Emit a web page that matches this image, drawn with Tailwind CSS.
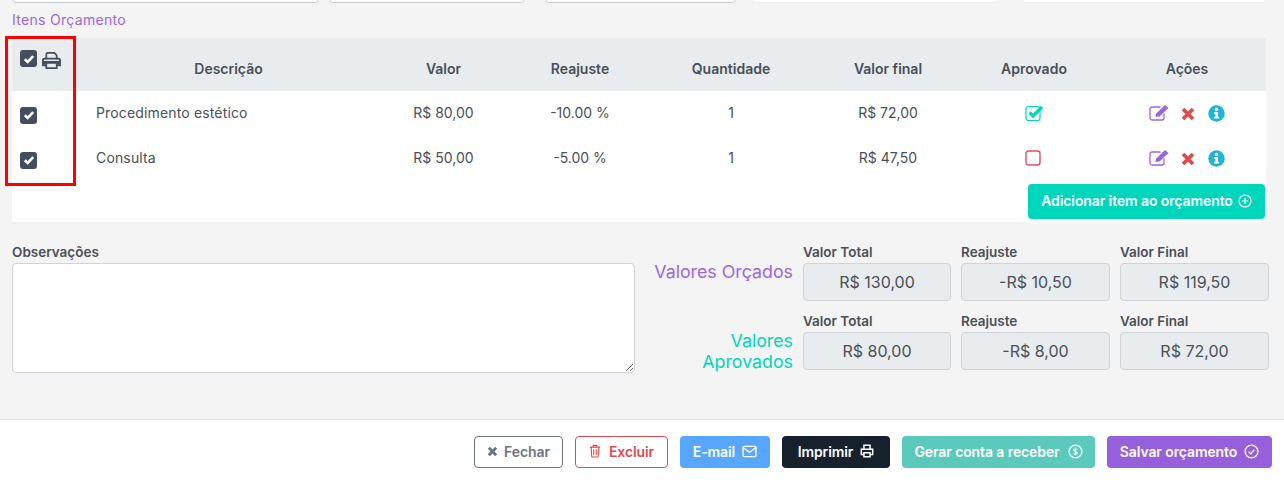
<!DOCTYPE html>
<html lang="pt-BR">
<head>
  <meta charset="UTF-8">
  <title>Itens Orçamento</title>
  <script src="https://cdn.jsdelivr.net/npm/@tailwindcss/browser@4"></script>
</head>
<body class="relative w-[1284px] h-[482px] overflow-hidden bg-[#f4f4f4] text-[#495057] font-['Inter',sans-serif] text-[14px]">
  <!-- Topo: campos cortados -->
  <div class="flex h-[3px] items-end">
    <div class="ml-[12px] w-[307px] h-[6px] bg-white border border-[#ccc] rounded-b"></div>
    <div class="ml-[10px] w-[196px] h-[6px] bg-white border border-[#ccc] rounded-b"></div>
    <div class="ml-[20px] w-[191px] h-[6px] bg-white border border-[#ccc] rounded-b"></div>
    <div class="ml-[15px] w-[248px] h-[6px] bg-white border border-[#eee] rounded-b"></div>
    <div class="ml-[22px] w-[246px] h-[6px] bg-white border border-[#eee] rounded-b"></div>
  </div>

  <h2 class="ml-[12px] mt-[8px] h-[17px] leading-[17px] text-[14px] tracking-[0.3px] text-[#9b66e6]">Itens Orçamento</h2>

  <!-- Tabela -->
  <div class="ml-[12px] mt-[10px] w-[1254px] h-[184px] bg-white">
    <table class="table-fixed w-[1254px] border-collapse">
      <colgroup>
        <col class="w-[72px]"><col class="w-[289px]"><col class="w-[141px]"><col class="w-[132px]"><col class="w-[170px]"><col class="w-[144px]"><col class="w-[148px]"><col class="w-[158px]">
      </colgroup>
      <thead class="bg-[#e9ecef]">
        <tr class="h-[53px] text-center text-[14px]">
          <th class="p-0 font-semibold align-top">
            <div class="flex items-start pl-[8px] pt-[12px] gap-[5px]">
              <span class="w-[17px] h-[17px] rounded-[3px] bg-[#454e5f] flex items-center justify-center">
                <svg viewBox="0 0 12 12" class="w-[12px] h-[12px]"><path d="M1.8 6.3 4.7 9 10.2 3.2" fill="none" stroke="#fff" stroke-width="2.600"/></svg>
              </span>
              <svg viewBox="0 0 20 18" class="w-[19px] h-[17px] mt-[2px]" fill="none" stroke="#454e5f"><path d="M4.500 8V2.500a1.500 1.500 0 0 1 1.500-1.500h7l2.500 2.500V8" stroke-width="1.800"/><path d="M4.500 14H1V8.500A1.500 1.500 0 0 1 2.500 7h15A1.500 1.500 0 0 1 19 8.500V14h-3.500" stroke-width="2"/><path d="M1 9.500h18V13H1z" fill="#454e5f" stroke="none"/><path d="M4.500 11.500h11V17h-11z" fill="#e9ecef" stroke-width="1.800"/></svg>
            </div>
          </th>
          <th class="p-0 pt-[8px] font-semibold">Descrição</th>
          <th class="p-0 pt-[8px] font-semibold">Valor</th>
          <th class="p-0 pt-[8px] font-semibold">Reajuste</th>
          <th class="p-0 pt-[8px] font-semibold">Quantidade</th>
          <th class="p-0 pt-[8px] font-semibold">Valor final</th>
          <th class="p-0 pt-[8px] font-semibold">Aprovado</th>
          <th class="p-0 pt-[8px] font-semibold">Ações</th>
        </tr>
      </thead>
      <tbody>
        <tr class="h-[45px] text-center">
          <td class="p-0">
            <div class="pl-[8px] pt-[3px]"><span class="w-[17px] h-[17px] rounded-[3px] bg-[#454e5f] flex items-center justify-center">
              <svg viewBox="0 0 12 12" class="w-[12px] h-[12px]"><path d="M1.8 6.3 4.7 9 10.2 3.2" fill="none" stroke="#fff" stroke-width="2.600"/></svg>
            </span></div>
          </td>
          <td class="p-0 pb-[2px] text-left pl-[12px] tracking-[0.15px]">Procedimento estético</td>
          <td class="p-0 pb-[2px]">R$ 80,00</td>
          <td class="p-0 pb-[2px]">-10.00 %</td>
          <td class="p-0 pb-[2px]">1</td>
          <td class="p-0 pb-[2px]">R$ 72,00</td>
          <td class="p-0">
            <svg viewBox="0 0 20 18" class="block w-[20px] h-[18px] ml-[65px] mb-[2px]" fill="none"><rect x="1" y="2.500" width="14" height="14" rx="2.500" stroke="#00d6bb" stroke-width="1.200"/><path d="M4.500 8.500 8 12 17 3" stroke="#00d6bb" stroke-width="3.200"/></svg>
          </td>
          <td class="p-0">
            <div class="flex items-center justify-center gap-[12px]">
              <svg viewBox="0 0 20 18" class="w-[20px] h-[18px] mb-[1px]" fill="none"><path d="M15 9.500V14a2 2 0 0 1-2 2H3a2 2 0 0 1-2-2V5a2 2 0 0 1 2-2H11.500" stroke="#9b66e6" stroke-width="1.300"/><path d="M6.500 13 7 9.700 16 1 19.500 4 10.500 12.500z" fill="#9b66e6"/></svg>
              <svg viewBox="0 0 14 14" class="w-[14px] h-[14px] mt-[1px]"><path d="M2 2 12 12M12 2 2 12" stroke="#dc4c4c" stroke-width="3.800"/></svg>
              <svg viewBox="0 0 18 18" class="w-[17px] h-[17px] ml-[1px]"><circle cx="9" cy="9" r="8.700" fill="#1fb5d8"/><circle cx="9" cy="4.800" r="1.800" fill="#fff"/><path d="M6.500 7.500H10.500V12.500H11.800V14.200H6.500V12.500H7.900V9.200H6.500z" fill="#fff"/></svg>
            </div>
          </td>
        </tr>
        <tr class="h-[45px] text-center">
          <td class="p-0">
            <div class="pl-[8px] pt-[3px]"><span class="w-[17px] h-[17px] rounded-[3px] bg-[#454e5f] flex items-center justify-center">
              <svg viewBox="0 0 12 12" class="w-[12px] h-[12px]"><path d="M1.8 6.3 4.7 9 10.2 3.2" fill="none" stroke="#fff" stroke-width="2.600"/></svg>
            </span></div>
          </td>
          <td class="p-0 pb-[2px] text-left pl-[12px] tracking-[0.15px]">Consulta</td>
          <td class="p-0 pb-[2px]">R$ 50,00</td>
          <td class="p-0 pb-[2px]">-5.00 %</td>
          <td class="p-0 pb-[2px]">1</td>
          <td class="p-0 pb-[2px]">R$ 47,50</td>
          <td class="p-0">
            <svg viewBox="0 0 16 16" class="block w-[16px] h-[16px] ml-[65px] mb-[2px]" fill="none"><rect x="1" y="1" width="14" height="14" rx="2.500" stroke="#e2505f" stroke-width="1.400"/></svg>
          </td>
          <td class="p-0">
            <div class="flex items-center justify-center gap-[12px]">
              <svg viewBox="0 0 20 18" class="w-[20px] h-[18px] mb-[1px]" fill="none"><path d="M15 9.500V14a2 2 0 0 1-2 2H3a2 2 0 0 1-2-2V5a2 2 0 0 1 2-2H11.500" stroke="#9b66e6" stroke-width="1.300"/><path d="M6.500 13 7 9.700 16 1 19.500 4 10.500 12.500z" fill="#9b66e6"/></svg>
              <svg viewBox="0 0 14 14" class="w-[14px] h-[14px] mt-[1px]"><path d="M2 2 12 12M12 2 2 12" stroke="#dc4c4c" stroke-width="3.800"/></svg>
              <svg viewBox="0 0 18 18" class="w-[17px] h-[17px] ml-[1px]"><circle cx="9" cy="9" r="8.700" fill="#1fb5d8"/><circle cx="9" cy="4.800" r="1.800" fill="#fff"/><path d="M6.500 7.500H10.500V12.500H11.800V14.200H6.500V12.500H7.900V9.200H6.500z" fill="#fff"/></svg>
            </div>
          </td>
        </tr>
      </tbody>
    </table>
    <div class="flex justify-end pr-[1px] pt-[3px]">
      <button class="w-[237px] h-[35px] pb-[2px] rounded-[4px] bg-[#00d6bb] text-white font-semibold text-[14px] tracking-[-0.1px] flex items-center justify-center gap-[5px]">
        Adicionar item ao orçamento
        <svg viewBox="0 0 16 16" class="w-[14px] h-[14px]" fill="none" stroke="#fff" stroke-width="1.400"><circle cx="8" cy="8" r="6.800"/><path d="M8 4.500v7M4.500 8h7"/></svg>
      </button>
    </div>
  </div>

  <!-- Observações e totais -->
  <div class="ml-[12px] mt-[20px] flex h-[140px]">
    <div class="w-[623px]">
      <label class="block h-[21px] leading-[21px] font-semibold text-[13.500px]">Observações</label>
      <textarea class="block w-[623px] h-[110px] bg-white border border-[#ced4da] rounded-[4px]"></textarea>
    </div>
    <div class="ml-[10px] w-[624px] flex flex-col gap-[10px]">
      <div class="flex h-[59px]">
        <div class="w-[148px] pt-[19px] text-right text-[17.800px] leading-[21px] text-[#9b66e6]">Valores Orçados</div>
        <div class="ml-[10px] grid grid-cols-[148px_149px_149px] gap-x-[10px]">
          <div><div class="h-[21px] leading-[21px] font-semibold text-[13.500px]">Valor Total</div><div class="h-[38px] flex items-center justify-center rounded-[4px] bg-[#e9ecef] border border-[#ced4da] text-[16px]">R$ 130,00</div></div>
          <div><div class="h-[21px] leading-[21px] font-semibold text-[13.500px]">Reajuste</div><div class="h-[38px] flex items-center justify-center rounded-[4px] bg-[#e9ecef] border border-[#ced4da] text-[16px]">-R$ 10,50</div></div>
          <div><div class="h-[21px] leading-[21px] font-semibold text-[13.500px]">Valor Final</div><div class="h-[38px] flex items-center justify-center rounded-[4px] bg-[#e9ecef] border border-[#ced4da] text-[16px]">R$ 119,50</div></div>
        </div>
      </div>
      <div class="flex h-[59px]">
        <div class="w-[148px] pt-[19px] text-right text-[17.800px] leading-[21px] text-[#00d6bb]">Valores<br>Aprovados</div>
        <div class="ml-[10px] grid grid-cols-[148px_149px_149px] gap-x-[10px]">
          <div><div class="h-[21px] leading-[21px] font-semibold text-[13.500px]">Valor Total</div><div class="h-[38px] flex items-center justify-center rounded-[4px] bg-[#e9ecef] border border-[#ced4da] text-[16px]">R$ 80,00</div></div>
          <div><div class="h-[21px] leading-[21px] font-semibold text-[13.500px]">Reajuste</div><div class="h-[38px] flex items-center justify-center rounded-[4px] bg-[#e9ecef] border border-[#ced4da] text-[16px]">-R$ 8,00</div></div>
          <div><div class="h-[21px] leading-[21px] font-semibold text-[13.500px]">Valor Final</div><div class="h-[38px] flex items-center justify-center rounded-[4px] bg-[#e9ecef] border border-[#ced4da] text-[16px]">R$ 72,00</div></div>
        </div>
      </div>
    </div>
  </div>

  <!-- Rodapé -->
  <footer class="absolute left-0 right-0 bottom-0 h-[63px] bg-white border-t border-[#dee2e6] flex justify-end gap-[12px] pt-[16px] pr-[12px] font-semibold text-[14px] tracking-[-0.1px]">
    <button class="w-[89px] h-[32px] pb-[2px] rounded-[4px] border border-[#6c757d] text-[#6c757d] flex items-center justify-center gap-[6px]">
      <svg viewBox="0 0 12 12" class="w-[11px] h-[11px]"><path d="M2 2 10 10M10 2 2 10" stroke="#6c757d" stroke-width="3.200"/></svg>Fechar
    </button>
    <button class="w-[93px] h-[32px] pb-[2px] rounded-[4px] border border-[#dc4c4c] text-[#dc4c4c] flex items-center justify-center gap-[8px]">
      <svg viewBox="0 0 14 16" class="w-[12px] h-[14px]" fill="none" stroke="#dc4c4c" stroke-width="1.300"><path d="M1 3.500h12M5 3.500V1.500h4v2M2.500 3.500l.7 10.500a1 1 0 0 0 1 1h5.600a1 1 0 0 0 1-1l.7-10.500M5.500 6v6.500M8.500 6v6.500"/></svg>Excluir
    </button>
    <button class="w-[90px] h-[32px] pb-[2px] rounded-[4px] bg-[#57a7ff] text-white flex items-center justify-center gap-[7px]">
      E-mail
      <svg viewBox="0 0 16 14" class="w-[15px] h-[13px]" fill="none" stroke="#fff" stroke-width="1.500"><rect x="1" y="1.500" width="14" height="11" rx="1.500"/><path d="M1.500 3 8 8l6.500-5"/></svg>
    </button>
    <button class="w-[108px] h-[32px] pb-[2px] rounded-[4px] bg-[#17202d] text-white flex items-center justify-center gap-[7px]">
      Imprimir
      <svg viewBox="0 0 16 16" class="w-[14px] h-[14px]" fill="none" stroke="#fff" stroke-width="1.700"><path d="M4.500 6V1.500h7V6M4.500 12H1.500V6h13v6h-3"/><path d="M4.500 10h7v4.500h-7z"/></svg>
    </button>
    <button class="w-[193px] h-[32px] pb-[2px] rounded-[4px] bg-[#5bc9bb] text-white flex items-center justify-center gap-[8px]">
      Gerar conta a receber
      <svg viewBox="0 0 16 16" class="w-[15px] h-[15px]" fill="none" stroke="#fff" stroke-width="1.400"><circle cx="8" cy="8" r="6.800"/><path d="M10 5.800C9.500 4.900 6 4.600 6 6.300c0 1.900 4 1.300 4 3.300 0 1.700-3.500 1.500-4 .6M8 3.800v8.400" stroke-width="1.100"/></svg>
    </button>
    <button class="w-[165px] h-[32px] pb-[2px] rounded-[4px] bg-[#9660dd] text-white flex items-center justify-center gap-[7px]">
      Salvar orçamento
      <svg viewBox="0 0 16 16" class="w-[15px] h-[15px]" fill="none" stroke="#fff" stroke-width="1.400"><circle cx="8" cy="8" r="6.800"/><path d="M5 8.300 7.200 10.500 11 6"/></svg>
    </button>
  </footer>

  <!-- Destaque vermelho sobre a primeira coluna -->
  <div class="absolute left-[5px] top-[36px] w-[71px] h-[150px] border-[3px] border-[#ff0000]"></div>
</body>
</html>
